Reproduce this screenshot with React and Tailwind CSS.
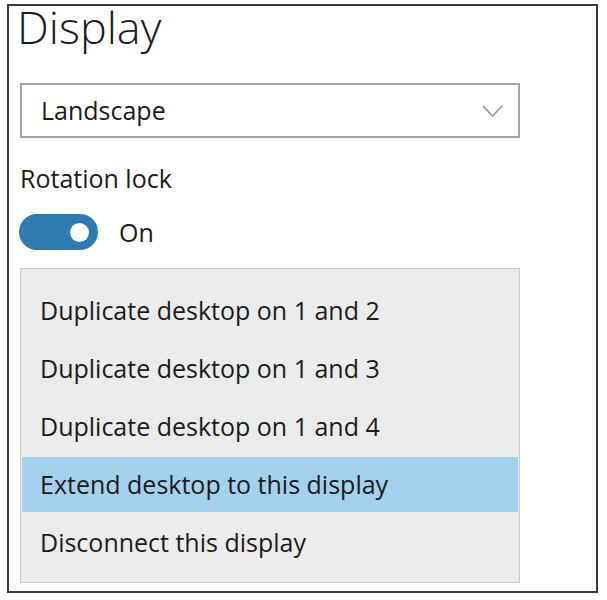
import React, { useState } from "react";

const options = [
  "Duplicate desktop on 1 and 2",
  "Duplicate desktop on 1 and 3",
  "Duplicate desktop on 1 and 4",
  "Extend desktop to this display",
  "Disconnect this display",
];

export default function App() {
  const [selected, setSelected] = useState(3);
  const [locked, setLocked] = useState(true);

  return (
    <div className="w-[607px] h-[600px] bg-white pt-[4px] pl-[7px] font-['Open_Sans',sans-serif] text-[#1b1b1b]">
      <div className="w-[591px] h-[589px] border-2 border-[#3c3c3c] flex flex-col">
        <h1 className="pl-[8px] text-[45px] leading-[42px] font-light">Display</h1>

        <div className="ml-[11px] mt-[35px] w-[500px] h-[55px] border-2 border-[#a3a3a3] flex items-center justify-between pl-[19px] pr-[15px]">
          <span className="text-[25px] leading-[25px]">Landscape</span>
          <svg width="21" height="12" viewBox="0 0 21 12" fill="none">
            <path d="M1 1 L10.5 11 L20 1" stroke="#8f8f8f" strokeWidth="1.5" />
          </svg>
        </div>

        <div className="ml-[11px] mt-[28px] text-[25px] leading-[25px]">Rotation lock</div>

        <div className="ml-[10px] mt-[23px] flex items-center gap-[21px]">
          <button
            onClick={() => setLocked(!locked)}
            className="w-[79px] h-[36px] rounded-full bg-[#2e7bb4] flex items-center justify-end pr-[9px]"
          >
            <span className="w-[19px] h-[19px] rounded-full bg-white" />
          </button>
          <span className="text-[25px] leading-[25px]">{locked ? "On" : "Off"}</span>
        </div>

        <div className="ml-[11px] mt-[18px] w-[500px] h-[315px] bg-[#ebebeb] border border-[#cbcbcb] pt-[12px]">
          {options.map((o, i) => (
            <div key={o} onClick={() => setSelected(i)} className="h-[58px] flex items-center">
              <div
                className={`w-full mx-[1px] h-[55px] flex items-center pl-[18px] text-[25px] leading-[25px] ${
                  i === selected ? "bg-[#a3d1ee]" : ""
                }`}
              >
                {o}
              </div>
            </div>
          ))}
        </div>
      </div>
    </div>
  );
}
